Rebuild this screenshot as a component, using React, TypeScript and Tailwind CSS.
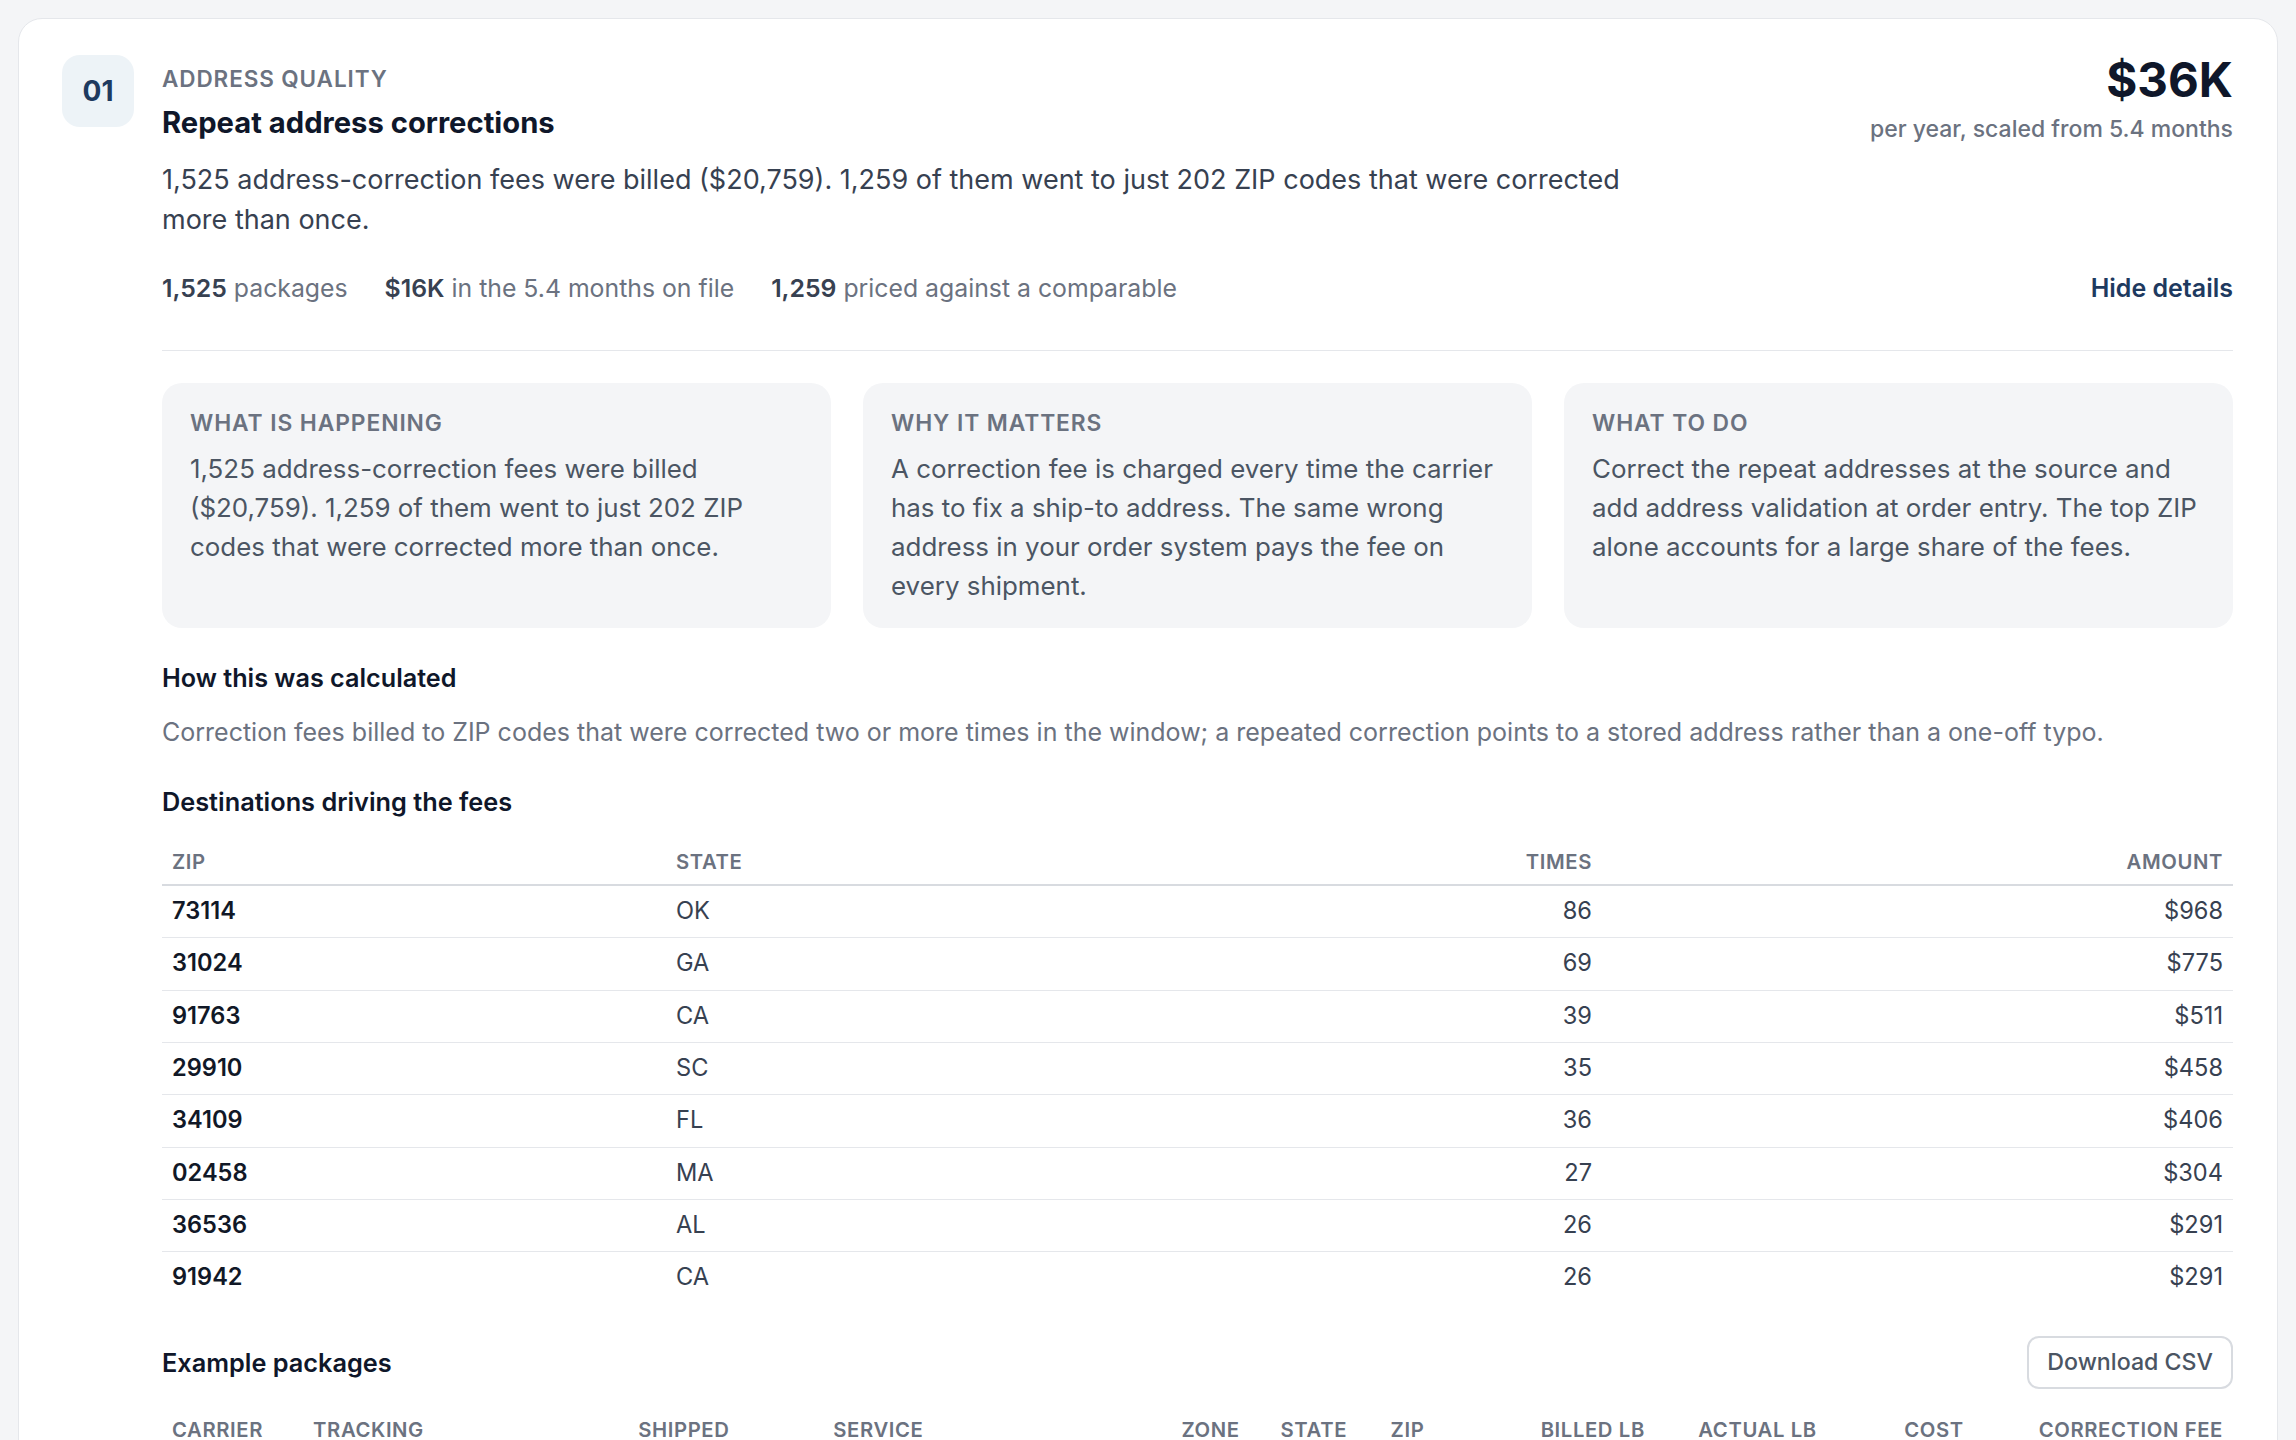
const destinations = [
  { zip: "73114", state: "OK", times: 86, amount: "$968" },
  { zip: "31024", state: "GA", times: 69, amount: "$775" },
  { zip: "91763", state: "CA", times: 39, amount: "$511" },
  { zip: "29910", state: "SC", times: 35, amount: "$458" },
  { zip: "34109", state: "FL", times: 36, amount: "$406" },
  { zip: "02458", state: "MA", times: 27, amount: "$304" },
  { zip: "36536", state: "AL", times: 26, amount: "$291" },
  { zip: "91942", state: "CA", times: 26, amount: "$291" },
];

const packageColumns = [
  { label: "Carrier", width: "w-[141px]", right: false },
  { label: "Tracking", width: "w-[325px]", right: false },
  { label: "Shipped", width: "w-[195px]", right: false },
  { label: "Service", width: "w-[348px]", right: false },
  { label: "Zone", width: "w-[99px]", right: false },
  { label: "State", width: "w-[110px]", right: false },
  { label: "Zip", width: "w-[150px]", right: false },
  { label: "Billed lb", width: "w-[120px]", right: true },
  { label: "Actual lb", width: "w-[176px]", right: true },
  { label: "Cost", width: "w-[147px]", right: true },
  { label: "Correction fee", width: "w-[259px]", right: true },
];

const explainers = [
  {
    title: "What is happening",
    body: "1,525 address-correction fees were billed ($20,759). 1,259 of them went to just 202 ZIP codes that were corrected more than once.",
  },
  {
    title: "Why it matters",
    body: "A correction fee is charged every time the carrier has to fix a ship-to address. The same wrong address in your order system pays the fee on every shipment.",
  },
  {
    title: "What to do",
    body: "Correct the repeat addresses at the source and add address validation at order entry. The top ZIP alone accounts for a large share of the fees.",
  },
];

function Stat({ value, label }: { value: string; label: string }) {
  return (
    <span className="text-[#6b7280]">
      <span className="font-semibold text-[#374151]">{value}</span> {label}
    </span>
  );
}

export default function App() {
  return (
    <div className="min-h-screen bg-[#f4f5f7] px-[18px] pt-[18px] [font-family:Inter,sans-serif]">
      <div className="rounded-[24px] border border-[#e5e7eb] bg-white pb-[40px] pl-[43px] pr-[44px] pt-[36px]">
        <div className="flex gap-[28px]">
          <div className="flex h-[72px] w-[72px] shrink-0 items-center justify-center rounded-[18px] bg-[#edf3f7] text-[28px] font-bold text-[#1e3a5f]">
            01
          </div>

          <div className="min-w-0 flex-1">
            <div className="flex justify-between gap-8">
              <div className="max-w-[1500px]">
                <div className="mt-[8px] text-[22.5px] font-semibold uppercase leading-[32px] tracking-[0.04em] text-[#6b7280]">
                  Address quality
                </div>
                <h2 className="mt-[9.5px] text-[29.2px] font-bold leading-[36px] text-[#0f172a]">
                  Repeat address corrections
                </h2>
                <p className="mt-[19px] text-[27px] leading-[40.6px] text-[#374151]">
                  1,525 address-correction fees were billed ($20,759). 1,259 of them went to just 202 ZIP codes that were corrected more than once.
                </p>
              </div>
              <div className="shrink-0 text-right">
                <div className="text-[47.5px] font-bold leading-[50px] text-[#0f172a]">$36K</div>
                <div className="mt-[9px] text-[23px] font-medium leading-[30px] text-[#6b7280]">
                  per year, scaled from 5.4 months
                </div>
              </div>
            </div>

            <div className="mt-[29px] flex items-center justify-between text-[24.8px] leading-[36px]">
              <div className="flex gap-[37px]">
                <Stat value="1,525" label="packages" />
                <Stat value="$16K" label="in the 5.4 months on file" />
                <Stat value="1,259" label="priced against a comparable" />
              </div>
              <button className="text-[25px] font-semibold text-[#1e3a5f]">Hide details</button>
            </div>

            <div className="mt-[44px] border-t border-[#e5e7eb] pt-[32px]">
              <div className="grid grid-cols-3 gap-[32px]">
                {explainers.map((item) => (
                  <div key={item.title} className="rounded-[20px] bg-[#f4f5f7] px-[28px] pb-[23px] pt-[25px]">
                    <div className="text-[22.8px] font-semibold uppercase leading-[30px] tracking-[0.04em] text-[#6b7280]">
                      {item.title}
                    </div>
                    <p className="mt-[11px] text-[25.9px] leading-[39px] text-[#4b5563]">{item.body}</p>
                  </div>
                ))}
              </div>

              <h3 className="mt-[33px] text-[25.2px] font-semibold leading-[34px] text-[#0f172a]">How this was calculated</h3>
              <p className="mt-[19.5px] text-[25px] leading-[36px] text-[#6b7280]">
                Correction fees billed to ZIP codes that were corrected two or more times in the window; a repeated correction points to a stored address rather than a one-off typo.
              </p>

              <h3 className="mt-[35px] text-[25.3px] font-semibold leading-[34px] text-[#0f172a]">Destinations driving the fees</h3>
              <table className="mt-[19px] w-full table-fixed border-collapse">
                <thead>
                  <tr className="border-b-2 border-[#d8dbe0] text-[20.3px] font-semibold uppercase leading-[28px] tracking-[0.03em] text-[#6b7280]">
                    <th className="w-[504px] px-[10px] pb-[8px] pt-[10px] text-left font-semibold">Zip</th>
                    <th className="w-[466px] px-[10px] pb-[8px] pt-[10px] text-left font-semibold">State</th>
                    <th className="w-[470px] px-[10px] pb-[8px] pt-[10px] text-right font-semibold">Times</th>
                    <th className="px-[10px] pb-[8px] pt-[10px] text-right font-semibold">Amount</th>
                  </tr>
                </thead>
                <tbody className="text-[23.6px] leading-[25.3px] text-[#374151]">
                  {destinations.map((row, i) => (
                    <tr key={row.zip} className={i < destinations.length - 1 ? "border-b border-[#e5e7eb]" : ""}>
                      <td className="px-[10px] pb-[14px] pt-[12px] font-semibold text-[#111827]">{row.zip}</td>
                      <td className="px-[10px] pb-[14px] pt-[12px]">{row.state}</td>
                      <td className="px-[10px] pb-[14px] pt-[12px] text-right">{row.times}</td>
                      <td className="px-[10px] pb-[14px] pt-[12px] text-right">{row.amount}</td>
                    </tr>
                  ))}
                </tbody>
              </table>

              <div className="mt-[32.5px] flex items-center justify-between">
                <h3 className="text-[25.3px] font-semibold leading-[34px] text-[#0f172a]">Example packages</h3>
                <button className="h-[53px] rounded-[12px] border-2 border-[#d8dbe0] px-[18px] text-[23.2px] font-medium text-[#4b5563]">
                  Download CSV
                </button>
              </div>
              <table className="mt-[16.5px] w-full table-fixed border-collapse">
                <thead>
                  <tr className="border-b-2 border-[#d8dbe0] text-[20.3px] font-semibold uppercase leading-[28px] tracking-[0.03em] text-[#6b7280]">
                    {packageColumns.map((col) => (
                      <th
                        key={col.label}
                        className={`${col.width} ${col.right ? "text-right" : "text-left"} whitespace-nowrap px-[10px] pb-[9px] pt-[10px] font-semibold`}
                      >
                        {col.label}
                      </th>
                    ))}
                  </tr>
                </thead>
              </table>
            </div>
          </div>
        </div>
      </div>
    </div>
  );
}
